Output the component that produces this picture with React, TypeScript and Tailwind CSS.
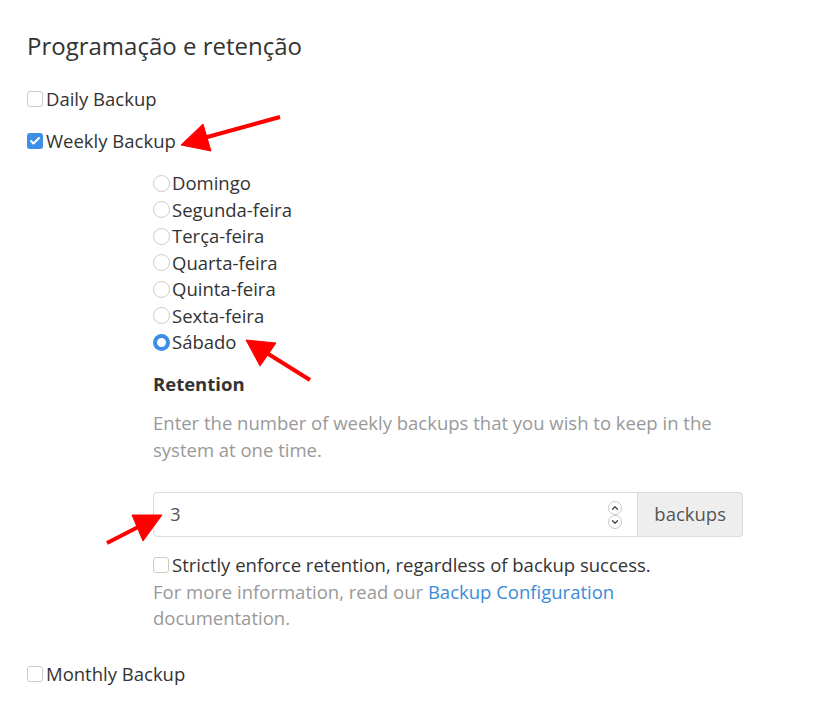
import { Check, ChevronUp, ChevronDown } from 'lucide-react'

const days = ['Domingo', 'Segunda-feira', 'Terça-feira', 'Quarta-feira', 'Quinta-feira', 'Sexta-feira', 'Sábado']

function Box({ checked = false }: { checked?: boolean }) {
  return checked ? (
    <span className="flex h-[16px] w-[16px] shrink-0 items-center justify-center rounded-[3px] bg-[#3d8ee6]">
      <Check className="h-[12px] w-[12px] text-white" strokeWidth={4} />
    </span>
  ) : (
    <span className="h-[16px] w-[16px] shrink-0 rounded-[3px] border border-[#cfcac4] bg-white" />
  )
}

function Radio({ checked = false }: { checked?: boolean }) {
  return checked ? (
    <span className="h-[17px] w-[17px] shrink-0 rounded-full border-[4px] border-[#3d8ee6] bg-white" />
  ) : (
    <span className="h-[17px] w-[17px] shrink-0 rounded-full border border-[#cfcac4] bg-white" />
  )
}

function Arrows() {
  return (
    <svg className="pointer-events-none absolute left-0 top-0" width="839" height="724">
      <g fill="#ff0000" stroke="#ff0000">
        <line x1="280" y1="117" x2="200" y2="139" strokeWidth="4" />
        <polygon points="181,145 203,124 211,151" strokeWidth="1" />
        <line x1="310" y1="380" x2="262" y2="350" strokeWidth="4" />
        <polygon points="246,340 276,343 260,366" strokeWidth="1" />
        <line x1="107" y1="543" x2="146" y2="523" strokeWidth="4" />
        <polygon points="162,515 132,515 143,541" strokeWidth="1" />
      </g>
    </svg>
  )
}

export default function App() {
  return (
    <div className="relative h-[724px] w-[839px] overflow-hidden bg-white font-['Open_Sans',sans-serif] text-[18.5px] leading-[26.5px] text-[#333333]">
      <div className="pl-[27px] pt-[29px]">
        <h2 className="text-[24px] leading-[33px] text-[#333333]">Programação e retenção</h2>

        <label className="mt-[24px] flex items-center gap-[3px]">
          <Box />
          <span>Daily Backup</span>
        </label>

        <label className="mt-[15.5px] flex items-center gap-[3px]">
          <Box checked />
          <span>Weekly Backup</span>
        </label>

        <div className="ml-[126px] mt-[15.5px] w-[590px]">
          <div className="flex flex-col">
            {days.map((d) => (
              <label key={d} className="flex items-center gap-[2px]">
                <Radio checked={d === 'Sábado'} />
                <span>{d}</span>
              </label>
            ))}
          </div>

          <h3 className="mt-[15px] font-bold">Retention</h3>
          <p className="mt-[13px] text-[#999999]">
            Enter the number of weekly backups that you wish to keep in the system at one time.
          </p>

          <div className="mt-[29px] flex h-[45px]">
            <div className="flex flex-1 items-center rounded-l-[4px] border border-[#dcdcdc] bg-white pl-[16px] pr-[15px]">
              <span className="flex-1 text-[#555555]">3</span>
              <div className="flex flex-col">
                <span className="flex h-[14px] w-[14px] items-center justify-center rounded-full border border-[#cfcac4]">
                  <ChevronUp className="h-[10px] w-[10px] text-[#444444]" strokeWidth={3} />
                </span>
                <span className="flex h-[14px] w-[14px] items-center justify-center rounded-full border border-[#cfcac4]">
                  <ChevronDown className="h-[10px] w-[10px] text-[#444444]" strokeWidth={3} />
                </span>
              </div>
            </div>
            <div className="flex items-center rounded-r-[4px] border border-l-0 border-[#dcdcdc] bg-[#eeeeee] px-[16px] text-[#555555]">
              backups
            </div>
          </div>

          <label className="mt-[15px] flex items-center gap-[3px]">
            <Box />
            <span>Strictly enforce retention, regardless of backup success.</span>
          </label>
          <p className="pr-[20px] text-[#999999]">
            For more information, read our <a className="text-[#3b8bd9]">Backup Configuration</a> documentation.
          </p>
        </div>

        <label className="mt-[29px] flex items-center gap-[3px]">
          <Box />
          <span>Monthly Backup</span>
        </label>
      </div>
      <Arrows />
    </div>
  )
}
